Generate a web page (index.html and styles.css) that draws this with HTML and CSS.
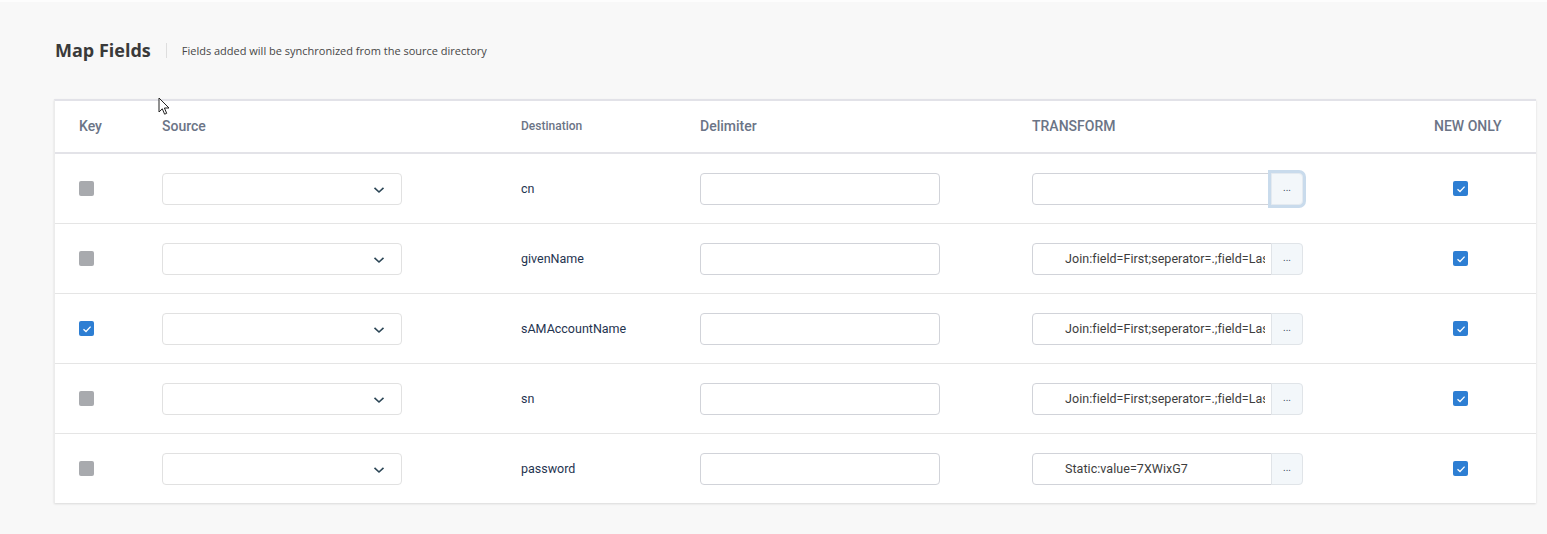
FILE: index.html
```html
<!DOCTYPE html>
<html>
<head>
<meta charset="utf-8">
<link rel="stylesheet" href="styles.css">
</head>
<body>
<div class="page">
  <div class="title-bar">
    <h1 class="title">Map Fields</h1>
    <span class="divider"></span>
    <span class="subtitle">Fields added will be synchronized from the source directory</span>
  </div>

  <div class="card">
    <div class="row head">
      <div class="cell">Key</div>
      <div class="cell">Source</div>
      <div class="cell small">Destination</div>
      <div class="cell">Delimiter</div>
      <div class="cell">TRANSFORM</div>
      <div class="cell">NEW ONLY</div>
    </div>

    <div class="row">
      <div class="cell"><span class="cb"></span></div>
      <div class="cell"><div class="select"><svg class="chev" width="12" height="8" viewBox="0 0 12 8"><path d="M1.5 1.8 L6 6 L10.5 1.8" fill="none" stroke="#2c4656" stroke-width="1.6"/></svg></div></div>
      <div class="cell dest">cn</div>
      <div class="cell"><div class="input"></div></div>
      <div class="cell"><div class="group"><div class="tinput"></div><div class="btn focus">...</div></div></div>
      <div class="cell"><span class="cb on new"><svg width="10" height="8" viewBox="0 0 10 8"><path d="M1.5 4.2 L4 6.5 L8.6 1.6" fill="none" stroke="#fff" stroke-width="1.3"/></svg></span></div>
    </div>

    <div class="row">
      <div class="cell"><span class="cb"></span></div>
      <div class="cell"><div class="select"><svg class="chev" width="12" height="8" viewBox="0 0 12 8"><path d="M1.5 1.8 L6 6 L10.5 1.8" fill="none" stroke="#2c4656" stroke-width="1.6"/></svg></div></div>
      <div class="cell dest">givenName</div>
      <div class="cell"><div class="input"></div></div>
      <div class="cell"><div class="group"><div class="tinput"><span>Join:field=First;seperator=.;field=Last</span></div><div class="btn">...</div></div></div>
      <div class="cell"><span class="cb on new"><svg width="10" height="8" viewBox="0 0 10 8"><path d="M1.5 4.2 L4 6.5 L8.6 1.6" fill="none" stroke="#fff" stroke-width="1.3"/></svg></span></div>
    </div>

    <div class="row">
      <div class="cell"><span class="cb on"><svg width="10" height="8" viewBox="0 0 10 8"><path d="M1.5 4.2 L4 6.5 L8.6 1.6" fill="none" stroke="#fff" stroke-width="1.3"/></svg></span></div>
      <div class="cell"><div class="select"><svg class="chev" width="12" height="8" viewBox="0 0 12 8"><path d="M1.5 1.8 L6 6 L10.5 1.8" fill="none" stroke="#2c4656" stroke-width="1.6"/></svg></div></div>
      <div class="cell dest">sAMAccountName</div>
      <div class="cell"><div class="input"></div></div>
      <div class="cell"><div class="group"><div class="tinput"><span>Join:field=First;seperator=.;field=Last</span></div><div class="btn">...</div></div></div>
      <div class="cell"><span class="cb on new"><svg width="10" height="8" viewBox="0 0 10 8"><path d="M1.5 4.2 L4 6.5 L8.6 1.6" fill="none" stroke="#fff" stroke-width="1.3"/></svg></span></div>
    </div>

    <div class="row">
      <div class="cell"><span class="cb"></span></div>
      <div class="cell"><div class="select"><svg class="chev" width="12" height="8" viewBox="0 0 12 8"><path d="M1.5 1.8 L6 6 L10.5 1.8" fill="none" stroke="#2c4656" stroke-width="1.6"/></svg></div></div>
      <div class="cell dest">sn</div>
      <div class="cell"><div class="input"></div></div>
      <div class="cell"><div class="group"><div class="tinput"><span>Join:field=First;seperator=.;field=Last</span></div><div class="btn">...</div></div></div>
      <div class="cell"><span class="cb on new"><svg width="10" height="8" viewBox="0 0 10 8"><path d="M1.5 4.2 L4 6.5 L8.6 1.6" fill="none" stroke="#fff" stroke-width="1.3"/></svg></span></div>
    </div>

    <div class="row last">
      <div class="cell"><span class="cb"></span></div>
      <div class="cell"><div class="select"><svg class="chev" width="12" height="8" viewBox="0 0 12 8"><path d="M1.5 1.8 L6 6 L10.5 1.8" fill="none" stroke="#2c4656" stroke-width="1.6"/></svg></div></div>
      <div class="cell dest">password</div>
      <div class="cell"><div class="input"></div></div>
      <div class="cell"><div class="group"><div class="tinput"><span>Static:value=7XWixG7</span></div><div class="btn">...</div></div></div>
      <div class="cell"><span class="cb on new"><svg width="10" height="8" viewBox="0 0 10 8"><path d="M1.5 4.2 L4 6.5 L8.6 1.6" fill="none" stroke="#fff" stroke-width="1.3"/></svg></span></div>
    </div>
  </div>

  <svg class="cursor" width="13" height="20" viewBox="0 0 13 20"><path d="M1 1 L1 15 L4.3 11.8 L6.6 17.2 L8.7 16.3 L6.4 11 L11 11 Z" fill="#fff" stroke="#222" stroke-width="1"/></svg>
</div>
</body>
</html>
```

FILE: styles.css
```css
* { box-sizing: border-box; }
html, body { margin: 0; padding: 0; }
body {
  background: #f8f8f8;
  font-family: Roboto, "Open Sans", "Liberation Sans", sans-serif;
  width: 1547px;
  height: 534px;
  overflow: hidden;
}
.page {
  position: relative;
  border-top: 2px solid #fdfdfd;
  padding: 0 11px 0 55px;
}
.title-bar {
  display: flex;
  align-items: center;
  height: 98px;
  padding-bottom: 2px;
}
.title {
  margin: 0;
  font-family: "Open Sans", sans-serif;
  font-weight: 700;
  font-size: 18px;
  color: #3a3a3a;
  line-height: 24px;
}
.divider {
  width: 1px;
  height: 15px;
  background: #dedede;
  margin: 0 15px 0 15px;
}
.subtitle {
  font-family: "Open Sans", sans-serif;
  font-size: 11px;
  color: #474747;
  margin-top: 1px;
}
.card {
  background: #fff;
  border-top: 2px solid #e2e2e8;
  border-left: 1px solid #ececec;
  box-shadow: 0 1px 2px rgba(0,0,0,0.12);
  width: 1482px;
  margin-left: -1px;
  margin-top: -1px;
}
.row {
  display: grid;
  grid-template-columns: 83px 359px 179px 332px 402px 1fr;
  padding: 0 35px 0 24px;
  height: 70px;
  align-items: center;
  border-bottom: 1px solid #e5e5e5;
}
.row.head {
  height: 53px;
  padding-bottom: 1px;
  border-bottom: 2px solid #e3e3e8;
}
.row.last { border-bottom: none; height: 69px; }
.head .cell {
  font-size: 14px;
  font-weight: 500;
  color: #6b7486;
  white-space: nowrap;
}
.head .cell.small { font-size: 12px; }
.cell { display: flex; align-items: center; }
.cb {
  width: 15px;
  height: 15px;
  border-radius: 2px;
  background: #a8aaae;
  display: inline-flex;
  align-items: center;
  justify-content: center;
}
.cb.on { background: #2d7ed3; }
.cb.new { margin-left: 19px; }
.select {
  width: 240px;
  height: 32px;
  border: 1px solid #e1e1e1;
  border-radius: 4px;
  display: flex;
  align-items: center;
  justify-content: flex-end;
  padding-right: 16px;
}
.chev { margin-top: 3px; }
.dest {
  font-size: 12.5px;
  color: #1f3450;
}
.input {
  width: 240px;
  height: 32px;
  border: 1px solid #d1d3d9;
  border-radius: 4px;
}
.group { display: flex; }
.tinput {
  width: 240px;
  height: 32px;
  border: 1px solid #d1d3d9;
  border-radius: 4px 0 0 4px;
  padding-left: 32px;
  padding-right: 6px;
  display: flex;
  align-items: center;
  overflow: hidden;
  white-space: nowrap;
  font-size: 12.5px;
  letter-spacing: 0.05px;
  color: #3d3d3d;
}
.tinput span { display: block; overflow: hidden; }
.btn {
  width: 32px;
  height: 32px;
  margin-left: -1px;
  border: 1px solid #e0e4e8;
  border-radius: 0 4px 4px 0;
  background: #f3f7fa;
  display: flex;
  align-items: center;
  justify-content: center;
  font-size: 10px;
  color: #3a4a5a;
  padding-bottom: 3px;
}
.btn.focus {
  box-shadow: 0 0 0 3px #c9dbec;
  border-color: #e4eaf0;
  position: relative;
}
.cursor {
  position: absolute;
  left: 158px;
  top: 95px;
}
```
